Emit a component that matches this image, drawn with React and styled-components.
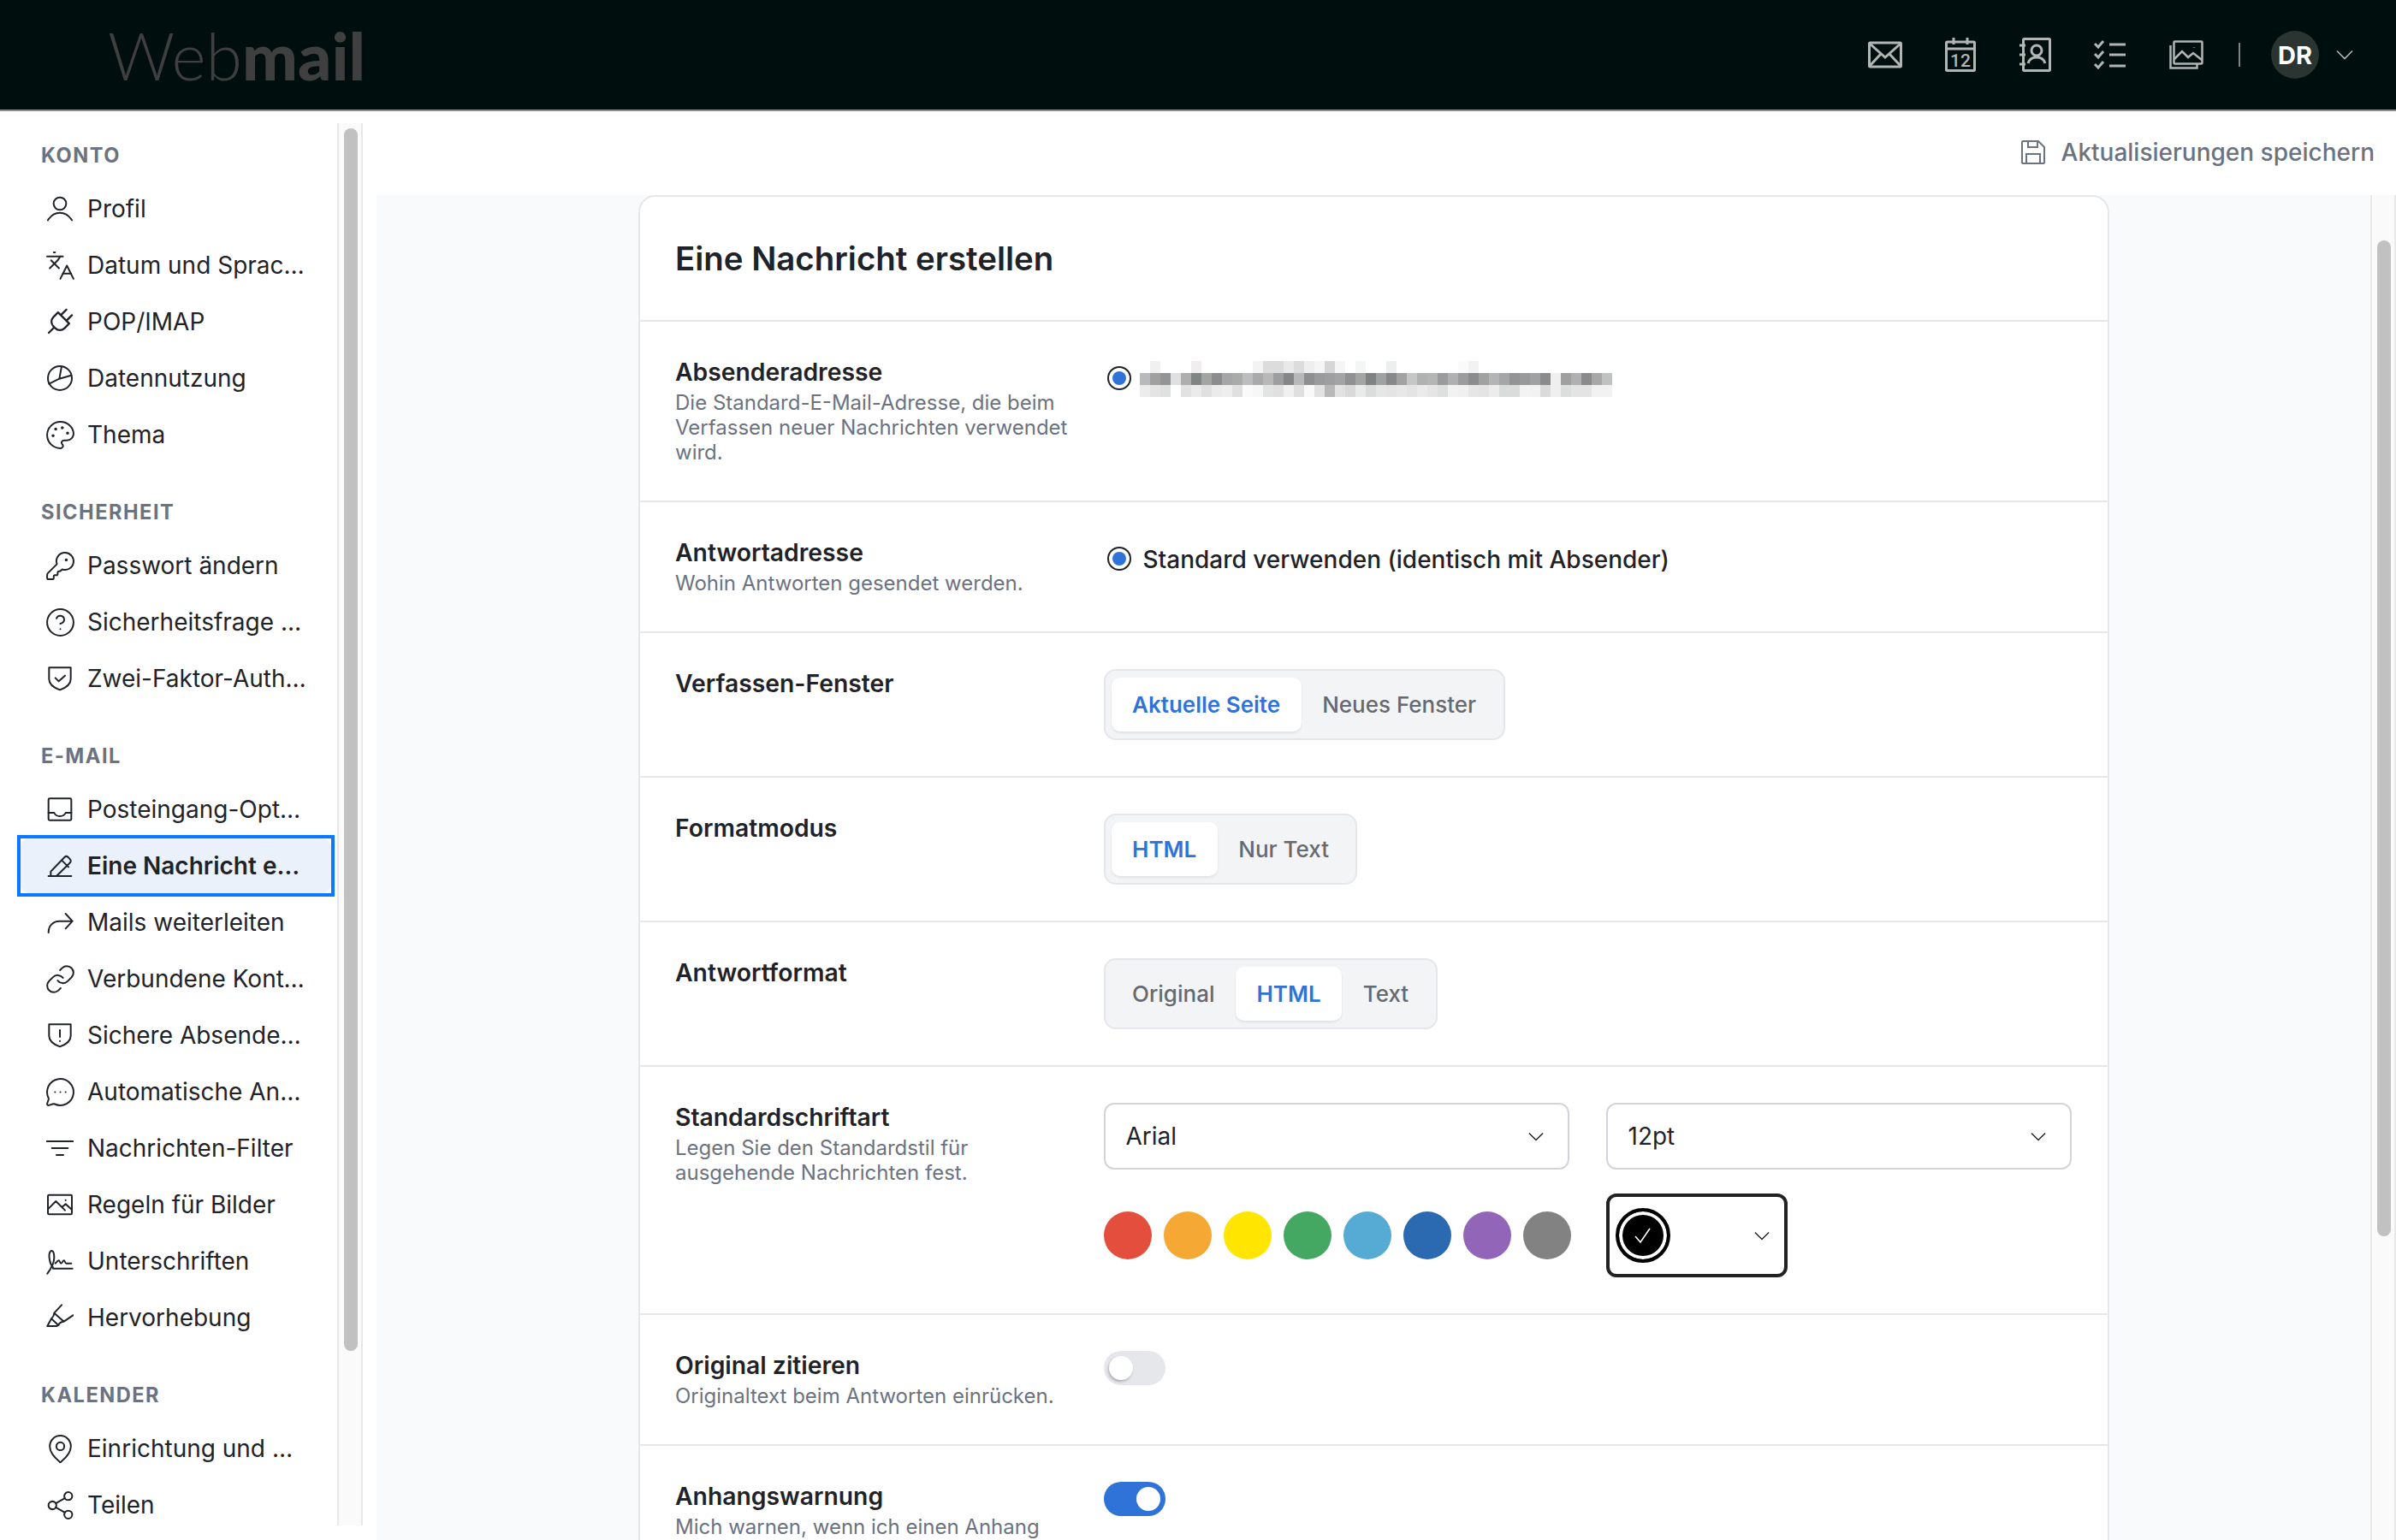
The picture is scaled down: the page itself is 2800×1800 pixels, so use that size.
import React from "react";
import styled, { createGlobalStyle } from "styled-components";
import {
  Languages, Palette, KeyRound, CircleHelp, Link, MessageCircleMore, MapPin, Share2,
} from "lucide-react";

const GlobalStyle = createGlobalStyle`
  html, body { margin: 0; padding: 0; background: #fff; }
  * { box-sizing: border-box; }
  body { font-family: Inter, "Noto Sans", sans-serif; color: #1f2328; }
`;

const Page = styled.div`
  width: 2800px;
  height: 1800px;
  overflow: hidden;
  display: flex;
  flex-direction: column;
`;

const Header = styled.header`
  height: 130px;
  flex: none;
  background: #000f0d;
  border-bottom: 2px solid #8c8f8c;
  display: flex;
  align-items: center;
  padding: 0 50px 0 126px;
`;

const Logo = styled.div`
  font-family: Lato, sans-serif;
  font-size: 77px;
  line-height: 1;
  color: #3f3f3f;
  font-weight: 300;
  b { font-weight: 900; }
`;

const HeaderIcons = styled.nav`
  margin-left: auto;
  display: flex;
  align-items: center;
  gap: 50px;
  color: #b1b5b3;
  svg { display: block; }
`;

const Divider = styled.div`
  width: 2px;
  height: 28px;
  background: #7d8280;
  margin: 0 -14px 0 -9px;
`;

const Account = styled.div`
  display: flex;
  align-items: center;
  gap: 20px;
`;

const Avatar = styled.div`
  width: 56px;
  height: 56px;
  border-radius: 50%;
  background: #2a3431;
  color: #fff;
  font-size: 29px;
  font-weight: 700;
  display: flex;
  align-items: center;
  justify-content: center;
`;

const Body = styled.div`
  flex: 1;
  min-height: 0;
  display: flex;
`;

const Sidebar = styled.aside`
  width: 440px;
  flex: none;
  display: flex;
  padding-bottom: 17px;
`;

const SideList = styled.div`
  width: 394px;
  flex: none;
  padding: 32px 0 0 24px;
  overflow: hidden;
`;

const Section = styled.section`
  margin-bottom: 39px;
`;

const SectionTitle = styled.h3`
  margin: 0 0 14px;
  height: 36px;
  padding: 2px 0 0 24px;
  font-size: 23.6px;
  line-height: 36px;
  font-weight: 700;
  letter-spacing: 1.5px;
  color: #6b7280;
`;

const NavItem = styled.div`
  position: relative;
  width: 363px;
  height: 64px;
  margin-bottom: 2px;
  padding: 0 29px 0 30px;
  display: flex;
  align-items: center;
  gap: 16px;
  border-radius: 10px;
  font-size: 28px;
  font-weight: ${(p) => (p.$active ? 600 : 400)};
  background: ${(p) => (p.$active ? "#ebf1fb" : "transparent")};
  ${(p) => p.$active && `
    &::before {
      content: "";
      position: absolute;
      inset: -4px;
      border: 4px solid #0a78ff;
    }
  `}
  span {
    overflow: hidden;
    white-space: nowrap;
    text-overflow: ellipsis;
    min-width: 0;
  }
  svg { flex: none; display: block; }
`;

const LucideBox = styled.div`
  width: 32px;
  height: 32px;
  flex: none;
  display: flex;
  align-items: center;
  justify-content: center;
`;

const Track = styled.div`
  width: 30px;
  flex: none;
  margin-top: ${(p) => p.$top}px;
  padding: ${(p) => p.$pad}px 6px 0;
  background: #fafafa;
  border-left: 2px solid #e8e8e8;
  border-right: 2px solid #e8e8e8;
`;

const Thumb = styled.div`
  width: 16px;
  height: ${(p) => p.$height}px;
  border-radius: 8px;
  background: #c1c1c1;
`;

const Main = styled.main`
  flex: 1;
  min-width: 0;
  display: flex;
  flex-direction: column;
`;

const TopBar = styled.div`
  height: 98px;
  flex: none;
  display: flex;
  align-items: center;
  justify-content: flex-end;
  gap: 19px;
  padding: 0 25px 2px 0;
  color: #6b7280;
  font-size: 28px;
  font-weight: 500;
`;

const ContentWrap = styled.div`
  flex: 1;
  min-height: 0;
  display: flex;
`;

const Canvas = styled.div`
  flex: 1;
  min-width: 0;
  background: #f9fafb;
  display: flex;
  justify-content: center;
  overflow: hidden;
`;

const Card = styled.div`
  width: 1719px;
  flex: none;
  align-self: flex-start;
  background: #fff;
  border: 2px solid #e5e7eb;
  border-radius: 20px;
`;

const CardTitle = styled.h1`
  margin: 0;
  height: 146px;
  padding: 0 41.5px;
  display: flex;
  align-items: center;
  font-size: 38.4px;
  font-weight: 600;
  color: #1f2328;
  border-bottom: 2px solid #e5e7eb;
`;

const Row = styled.div`
  display: grid;
  grid-template-columns: 462px 1fr;
  column-gap: 38.5px;
  padding: 44px 42px 42px 41.5px;
  border-bottom: 2px solid #e5e7eb;
`;

const Label = styled.div`
  font-size: 28.3px;
  line-height: 30px;
  font-weight: 600;
  color: #1f2328;
`;

const Desc = styled.div`
  margin-top: 6px;
  font-size: 24px;
  line-height: 29px;
  color: #6b7280;
`;

const RadioLine = styled.div`
  height: 46px;
  padding-left: 4px;
  display: flex;
  align-items: center;
  gap: 14px;
  font-size: 28px;
  font-weight: 500;
  color: #1f2328;
`;

const Radio = styled.div`
  width: 28px;
  height: 28px;
  margin-top: -2px;
  flex: none;
  border-radius: 50%;
  border: 2px solid #1f2328;
  display: flex;
  align-items: center;
  justify-content: center;
  &::after {
    content: "";
    width: 16px;
    height: 16px;
    border-radius: 50%;
    background: #2f73d9;
  }
`;

const PixelSvg = styled.svg`
  flex: none;
  margin-left: -4px;
`;

const Segmented = styled.div`
  display: inline-flex;
  margin-top: -2px;
  padding: 8px 7px;
  background: #f3f4f6;
  border: 2px solid #e5e7eb;
  border-radius: 14px;
`;

const Segment = styled.div`
  height: 63px;
  padding: 0 24.5px;
  display: flex;
  align-items: center;
  border-radius: 10px;
  font-size: 26px;
  font-weight: ${(p) => (p.$active ? 600 : 500)};
  color: ${(p) => (p.$active ? "#2f73d9" : "#666a70")};
  background: ${(p) => (p.$active ? "#fff" : "transparent")};
  box-shadow: ${(p) => (p.$active ? "0 2px 3px rgba(0, 0, 0, 0.08)" : "none")};
`;

const FontGrid = styled.div`
  margin-top: -2px;
  display: grid;
  grid-template-columns: 544px 1fr;
  column-gap: 43px;
  row-gap: 28px;
  align-items: center;
`;

const Select = styled.div`
  height: 78px;
  padding: 0 28px 0 24px;
  display: flex;
  align-items: center;
  justify-content: space-between;
  border: 2px solid #d1d5db;
  border-radius: 12px;
  font-size: 28px;
  color: #1f2328;
`;

const Swatches = styled.div`
  display: flex;
  justify-content: space-between;
  width: 546px;
`;

const Swatch = styled.div`
  width: 56px;
  height: 56px;
  border-radius: 50%;
  background: ${(p) => p.$color};
`;

const ColorSelect = styled.div`
  width: 212px;
  height: 98px;
  padding: 0 17px 0 7px;
  display: flex;
  align-items: center;
  justify-content: space-between;
  border: 4px solid #222;
  border-radius: 12px;
`;

const ColorDot = styled.div`
  width: 64px;
  height: 64px;
  border-radius: 50%;
  background: #000;
  border: 4px solid #000;
  box-shadow: inset 0 0 0 4px #fff;
  display: flex;
  align-items: center;
  justify-content: center;
`;

const Toggle = styled.div`
  width: 72px;
  height: 40px;
  margin-top: -2px;
  padding: 6px;
  border-radius: 20px;
  display: flex;
  justify-content: ${(p) => (p.$on ? "flex-end" : "flex-start")};
  background: ${(p) => (p.$on ? "#2f73d9" : "#e5e7eb")};
  &::after {
    content: "";
    width: 28px;
    height: 28px;
    border-radius: 50%;
    background: #fff;
    box-shadow: ${(p) => (p.$on ? "none" : "-1px 2px 3px rgba(0, 0, 0, 0.25)")};
  }
`;

const Icon = ({ size = 32, width = 1.5, children, vb = 24 }) => (
  <svg width={size} height={size} viewBox={`0 0 ${vb} ${vb}`} fill="none" stroke="currentColor" strokeWidth={width} strokeLinecap="round" strokeLinejoin="round">
    {children}
  </svg>
);

const Chevron = ({ w = 18, color = "#1f2328" }) => (
  <svg width={w} height={w / 2 + 2} viewBox="0 0 20 11" fill="none" stroke={color} strokeWidth="1.6">
    <path d="M1 1l9 9 9-9" />
  </svg>
);

const lucide = (C) => () => (
  <LucideBox>
    <C size={37} strokeWidth={1.3} />
  </LucideBox>
);

const nav = {
  user: () => <Icon><circle cx="12" cy="7.5" r="5.500" /><path d="M1.500 22c2.500-4 6-6.500 10.500-6.500s8 2.500 10.500 6.500" /></Icon>,
  lang: lucide(Languages),
  plug: () => <Icon><g transform="translate(12 12) rotate(45) scale(1.15) translate(-12 -12)"><path d="M12 24v-6M9 8V2M15 8V2M6 8h12v5a5 5 0 0 1-5 5h-2a5 5 0 0 1-5-5z" /></g></Icon>,
  pie: () => <Icon><circle cx="12" cy="12" r="10.500" /><path d="M13.500 1.800L11.500 12.500 2.500 17M11.500 12.500L22 9.500" /></Icon>,
  palette: lucide(Palette),
  key: lucide(KeyRound),
  help: lucide(CircleHelp),
  shieldCheck: () => <Icon><path d="M2.500 2.500h19v10c0 4.500-4 7.500-9.500 9.500-5.500-2-9.500-5-9.500-9.500z" /><path d="M8 11.500l3 3 5.500-5" /></Icon>,
  inbox: () => <Icon><rect x="2" y="2.500" width="20" height="19" rx="1" /><path d="M2 15h5c1 2.500 2.500 3 5 3s4-.5 5-3h5" /></Icon>,
  pencil: () => <Icon><path d="M2 21h20M4 21v-4L16 4.500c1-1 2.300-1 3.300 0l1.500 1.600c1 1 1 2.300 0 3.300L9 21M13.500 7l6 6" /></Icon>,
  forward: () => <Icon><path d="M2 21c0-6 4-10 9.500-10H23M17 4.500l6 6.500-6 6.500" /></Icon>,
  link: lucide(Link),
  shieldAlert: () => <Icon><path d="M2.500 2.500h19v10c0 4.500-4 7.500-9.500 9.500-5.500-2-9.500-5-9.500-9.500z" /><path d="M12 7.500v6M12 17v.2" /></Icon>,
  chat: lucide(MessageCircleMore),
  filter: () => <Icon><path d="M0.500 6h23M5 12h14M9 18h6" /></Icon>,
  image: () => <Icon><rect x="1.500" y="3.500" width="21" height="17" rx="1" /><path d="M1.500 16l7-7 8 8M14 14l3-2.500 5.500 5M17 8v.2" /></Icon>,
  sign: () => <Icon><path d="M1 23c3-4 6-9 6-14 0-3-.8-6-2.300-6S2 6 3 11c.5 3 1.500 5 3 6.500M8 14c1-1 2-2.500 3-2.500s1 2.500 2 2.500 1.500-2.500 2.500-2.500 1 2.500 2 2.500h4.500M6 18.500h17" /></Icon>,
  mark: () => <Icon><path d="M13.500 1L7 8l8.500 7.500L23.500 10M7 8c0 2-1 3.500-2.500 5l6 5.500c1-1.500 3-3 5-3M4.500 13L1 19.500h8l2-1" /></Icon>,
  pin: lucide(MapPin),
  share: lucide(Share2),
};

const sections = [
  { title: "KONTO", items: [["user", "Profil"], ["lang", "Datum und Sprache"], ["plug", "POP/IMAP"], ["pie", "Datennutzung"], ["palette", "Thema"]] },
  { title: "SICHERHEIT", items: [["key", "Passwort ändern"], ["help", "Sicherheitsfrage ändern"], ["shieldCheck", "Zwei-Faktor-Authentifizierung"]] },
  {
    title: "E-MAIL",
    items: [
      ["inbox", "Posteingang-Optionen"], ["pencil", "Eine Nachricht erstellen"], ["forward", "Mails weiterleiten"],
      ["link", "Verbundene Konten"], ["shieldAlert", "Sichere Absenderadressen"], ["chat", "Automatische Antwort"],
      ["filter", "Nachrichten-Filter"], ["image", "Regeln für Bilder"], ["sign", "Unterschriften"], ["mark", "Hervorhebung"],
    ],
  },
  { title: "KALENDER", items: [["pin", "Einrichtung und Standort"], ["share", "Teilen"]] },
];

const swatchColors = ["#e34f3c", "#f5a833", "#ffe500", "#45a862", "#55abd3", "#2b69b0", "#9365b8", "#828282"];

// blurred address, one list per pixel row
const blur = [
  "fff f0f0f0 fff fff fff f0eeee fff fff fff fff fff f3f3f3 dcdcdc dcdcdc e8eaea dcdcdc eeeeee f5f5f5 d6d6d6 f5f5f5 fff f4f6f6 fff fff edefef fff fff fff fff fff fff fafafa f2f2f2 fff fff fff fff fff fff fff fff fff fff fff fff fff",
  "b8b9bb a0a0a0 929496 dfe1e0 aeaeae 808584 a3a5a3 8b8c8e a5a6a8 a8abaa bcbdbf aaaaaa b8b8b8 9d9ea0 858687 b7b9b8 8e8f91 9a9b9d 9e9fa1 a4a4a4 8f9193 a4a4a4 7f8384 a0a2a1 87888a a2a2a2 c6c6c6 b0b2b1 b4b6b5 9a9b9d b0b0b0 9b9c9e 8b8c8e a0a2a1 b4b4b4 a5a6a8 939496 98999b a0a2a1 8a8b8d efefef a0a0a0 b0b0b0 8a8a8c a8a8a8 c0c2c1",
  "ececec e4e4e4 dfe1e0 fff e2e2e2 ebebeb e0e0e0 ebebeb eeeeee e0e0e0 fafafa f7f7f7 e2e4e3 e0e0e0 f0f0f0 dfdfdf f9f9f9 e2e2e2 b8b8b8 e2e2e2 d9d9d9 e9ebea dcdcdc e5e7e6 e4e4e4 e8e8e8 e4e4e4 ebebeb e5e5e5 dee0df f2f2f2 f0f0f0 e6e6e6 e4e4e4 ececec dadcdb dadcdb f3f3f3 f2f2f2 dadada efefef dcdedd e4e4e4 e4e4e4 f2f2f2 f2f2f2",
];

const BlurredAddress = () => (
  <PixelSvg width="552" height="42" viewBox="0 0 552 42" shapeRendering="crispEdges">
    {blur.map((line, r) =>
      line.split(" ").map((c, i) => <rect key={`${r}-${i}`} x={i * 12} y={r * 14} width="12" height="14" fill={`#${c}`} />)
    )}
  </PixelSvg>
);

const Segments = ({ items, active }) => (
  <div>
    <Segmented>
      {items.map((t) => (
        <Segment key={t} $active={t === active}>{t}</Segment>
      ))}
    </Segmented>
  </div>
);

export default function App() {
  return (
    <Page>
      <GlobalStyle />
      <Header>
        <Logo>Web<b>mail</b></Logo>
        <HeaderIcons>
          <svg width="40" height="32" viewBox="0 0 40 32" fill="none" stroke="currentColor" strokeWidth="3">
            <rect x="1.500" y="2" width="37" height="28" rx="1" /><path d="M2 3l18 16L38 3M2 29l13-14M38 29L25 15" />
          </svg>
          <svg width="36" height="40" viewBox="0 0 36 40" fill="none" stroke="currentColor" strokeWidth="3">
            <rect x="1.500" y="5" width="33" height="33.500" rx="1" /><path d="M1.500 13h33M10 0v8M26 0v8" />
            <text x="18" y="34" fontFamily="Roboto, sans-serif" fontSize="21" fontWeight="500" textAnchor="middle" fill="currentColor" stroke="none">12</text>
          </svg>
          <svg width="38" height="40" viewBox="0 0 38 40" fill="none" stroke="currentColor" strokeWidth="3">
            <rect x="5.500" y="1.500" width="31" height="37" rx="1" /><circle cx="21" cy="15" r="6" />
            <path d="M11 30c1.500-5 5-7 10-7s8.500 2 10 7M1 9h7M1 20h7M1 31h7" />
          </svg>
          <svg width="38" height="34" viewBox="0 0 38 34" fill="none" stroke="currentColor" strokeWidth="3">
            <path d="M1 4l4 4 6-7M1 16l4 4 6-7M1 28l4 4 6-7M18 5h19M18 17h19M18 30h19" />
          </svg>
          <svg width="40" height="34" viewBox="0 0 40 34" fill="none" stroke="currentColor" strokeWidth="2.500">
            <rect x="5.500" y="1.500" width="33" height="26" rx="1" /><path d="M1.500 6v26.500h31v-5M6 22l9-9 7 7 6-5 10 8M29 8v.5" />
          </svg>
          <Divider />
          <Account>
            <Avatar>DR</Avatar>
            <Chevron w={20} color="#b1b5b3" />
          </Account>
        </HeaderIcons>
      </Header>
      <Body>
        <Sidebar>
          <SideList>
            {sections.map((s) => (
              <Section key={s.title}>
                <SectionTitle>{s.title}</SectionTitle>
                {s.items.map(([icon, text]) => {
                  const Glyph = nav[icon];
                  return (
                    <NavItem key={text} $active={icon === "pencil"}>
                      <Glyph />
                      <span>{text}</span>
                    </NavItem>
                  );
                })}
              </Section>
            ))}
          </SideList>
          <Track $top={14} $pad={6}>
            <Thumb $height={1429} />
          </Track>
        </Sidebar>
        <Main>
          <TopBar>
            <svg width="28" height="28" viewBox="0 0 28 28" fill="none" stroke="currentColor" strokeWidth="2">
              <path d="M2 1h18l7 7v18a1 1 0 0 1-1 1H2a1 1 0 0 1-1-1V2a1 1 0 0 1 1-1zM8 1v7h11V1M6 27V16h16v11" />
            </svg>
            Aktualisierungen speichern
          </TopBar>
          <ContentWrap>
            <Canvas>
              <Card>
                <CardTitle>Eine Nachricht erstellen</CardTitle>
                <Row>
                  <div>
                    <Label>Absenderadresse</Label>
                    <Desc>Die Standard-E-Mail-Adresse, die beim Verfassen neuer Nachrichten verwendet wird.</Desc>
                  </div>
                  <RadioLine><Radio /><BlurredAddress /></RadioLine>
                </Row>
                <Row>
                  <div>
                    <Label>Antwortadresse</Label>
                    <Desc>Wohin Antworten gesendet werden.</Desc>
                  </div>
                  <RadioLine><Radio />Standard verwenden (identisch mit Absender)</RadioLine>
                </Row>
                <Row>
                  <Label>Verfassen-Fenster</Label>
                  <Segments items={["Aktuelle Seite", "Neues Fenster"]} active="Aktuelle Seite" />
                </Row>
                <Row>
                  <Label>Formatmodus</Label>
                  <Segments items={["HTML", "Nur Text"]} active="HTML" />
                </Row>
                <Row>
                  <Label>Antwortformat</Label>
                  <Segments items={["Original", "HTML", "Text"]} active="HTML" />
                </Row>
                <Row>
                  <div>
                    <Label>Standardschriftart</Label>
                    <Desc>Legen Sie den Standardstil für ausgehende Nachrichten fest.</Desc>
                  </div>
                  <FontGrid>
                    <Select>Arial<Chevron /></Select>
                    <Select>12pt<Chevron /></Select>
                    <Swatches>
                      {swatchColors.map((c) => <Swatch key={c} $color={c} />)}
                    </Swatches>
                    <ColorSelect>
                      <ColorDot>
                        <svg width="24" height="24" viewBox="0 0 24 24" fill="none" stroke="#fff" strokeWidth="1.600"><path d="M3 13l6 7L20 4" /></svg>
                      </ColorDot>
                      <Chevron />
                    </ColorSelect>
                  </FontGrid>
                </Row>
                <Row>
                  <div>
                    <Label>Original zitieren</Label>
                    <Desc>Originaltext beim Antworten einrücken.</Desc>
                  </div>
                  <Toggle />
                </Row>
                <Row>
                  <div>
                    <Label>Anhangswarnung</Label>
                    <Desc>Mich warnen, wenn ich einen Anhang erwähne, aber nichts angehängt ist.</Desc>
                  </div>
                  <Toggle $on />
                </Row>
              </Card>
            </Canvas>
            <Track $top={0} $pad={53}>
              <Thumb $height={1164} />
            </Track>
          </ContentWrap>
        </Main>
      </Body>
    </Page>
  );
}
